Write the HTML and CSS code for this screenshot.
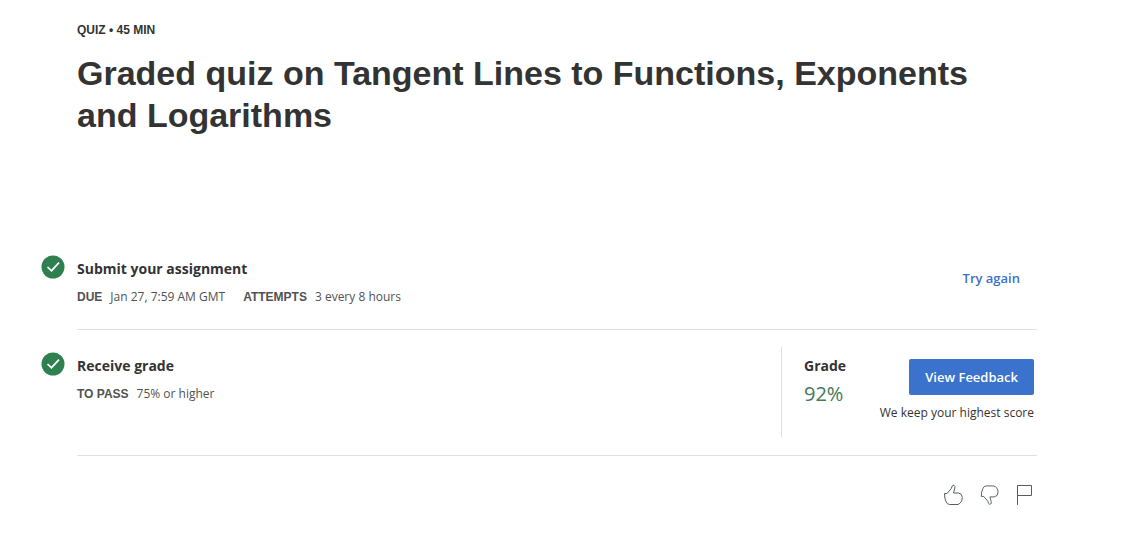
FILE: index.html
```html
<!DOCTYPE html>
<html lang="en">
<head>
<meta charset="utf-8">
<meta name="viewport" content="width=device-width, initial-scale=1">
<title>Graded quiz</title>
<link rel="stylesheet" href="styles.css">
</head>
<body>
<main class="page">
  <header class="intro">
    <p class="kind">QUIZ • 45 MIN</p>
    <h1 class="title">Graded quiz on Tangent Lines to Functions, Exponents and Logarithms</h1>
  </header>

  <section class="step">
    <svg class="check" viewBox="0 0 24 24" aria-hidden="true"><circle cx="12" cy="12" r="11.5"/><path d="M6.500 12l4 3.700 7.500-8"/></svg>
    <div class="info">
      <h2 class="name">Submit your assignment</h2>
      <dl class="facts">
        <div class="fact"><dt>DUE</dt><dd>Jan 27, 7:59 AM GMT</dd></div>
        <div class="fact"><dt>ATTEMPTS</dt><dd>3 every 8 hours</dd></div>
      </dl>
    </div>
    <div class="retry"><a class="link" href="#">Try again</a></div>
  </section>

  <section class="step step-grade">
    <svg class="check" viewBox="0 0 24 24" aria-hidden="true"><circle cx="12" cy="12" r="11.5"/><path d="M6.500 12l4 3.700 7.500-8"/></svg>
    <div class="info">
      <h2 class="name">Receive grade</h2>
      <dl class="facts">
        <div class="fact"><dt>TO PASS</dt><dd>75% or higher</dd></div>
      </dl>
    </div>
    <div class="result">
      <div class="grade">
        <h2 class="name">Grade</h2>
        <p class="score">92%</p>
      </div>
      <div class="feedback">
        <button class="button" type="button">View Feedback</button>
        <p class="note">We keep your highest score</p>
      </div>
    </div>
  </section>

  <footer class="reactions">
    <button class="icon" type="button" aria-label="Like"><svg viewBox="0 0 20 22"><path d="M1.500 9.500H4L8.300 4.500 9.200 2Q10 .8 11.200 1.500 12.300 2.200 11.800 4L10.500 9H15.500Q19.300 9.500 19.300 13.500 19.300 18.500 15 20.500H6.500Q4 20.300 3 17.500 1.500 15 1.500 9.500Z"/></svg></button>
    <button class="icon" type="button" aria-label="Dislike"><svg viewBox="0 0 21 22"><path d="M2.500 12.500H5L9.300 17.500 10.200 20Q11 21.200 12.200 20.500 13.300 19.800 12.800 18L11.500 13H16Q20 12.500 20 8 20 3 15.500 1.500H7.500Q5 1.500 4 4.500 2.300 7 2.500 12.500Z"/></svg></button>
    <button class="icon" type="button" aria-label="Report"><svg viewBox="0 0 20 22"><path d="M2.500 21V1.500H16.500V11.500H2.500"/></svg></button>
  </footer>
</main>
</body>
</html>
```
FILE: styles.css
```css
* {
  box-sizing: border-box;
}

body {
  margin: 0;
  background: #fff;
  color: #333;
  font: 12px/20px "Open Sans", "Noto Sans", sans-serif;
}

h1, h2, p, dl, dd {
  margin: 0;
}

.page {
  padding: 20px 95px 20px 41px;
}

.intro {
  padding: 0 36px;
  font-family: Arial, "Liberation Sans", sans-serif;
}

.kind {
  font-size: 12px;
  font-weight: 700;
}

.title {
  margin-top: 12px;
  font-size: 34px;
  line-height: 42px;
  font-weight: 700;
}

.step {
  display: flex;
  position: relative;
  padding: 18px 0 23px;
}

.step::after {
  content: "";
  position: absolute;
  right: 0;
  bottom: 0;
  left: 36px;
  border-bottom: 1px solid #e1e1e1;
}

.intro + .step {
  margin-top: 97px;
}

.check {
  flex: none;
  width: 24px;
  height: 24px;
  margin: 4px 12px 0 0;
}

.check circle {
  fill: #2f8050;
}

.check path {
  fill: none;
  stroke: #fff;
  stroke-width: 1.7;
}

.info {
  flex: 1;
  padding-top: 8px;
}

.name {
  font-size: 14px;
  line-height: 20px;
  font-weight: 700;
}

.facts {
  display: flex;
  gap: 18px;
  margin-top: 8px;
  color: #525252;
}

.fact {
  display: flex;
  gap: 8px;
}

.fact dt {
  font-family: Arial, "Liberation Sans", sans-serif;
  font-weight: 700;
}

.fact dd {
  font-weight: 400;
}

.retry {
  display: flex;
  align-items: center;
  padding: 0 17px 2px 0;
}

.link {
  color: #3b71ca;
  font-size: 13px;
  font-weight: 600;
  text-decoration: none;
}

.step-grade {
  padding: 17px 0 19px;
}

.step-grade .check {
  margin-top: 5px;
}

.step-grade .info {
  padding-top: 9px;
}

.result {
  display: flex;
  justify-content: space-between;
  width: 256px;
  min-height: 90px;
  padding: 9px 3px 0 22px;
  border-left: 1px solid #e1e1e1;
}

.score {
  margin-top: 4px;
  color: #43785a;
  font-size: 20px;
  line-height: 28px;
}

.feedback {
  display: flex;
  flex-direction: column;
  align-items: flex-end;
  gap: 8px;
  padding-top: 3px;
}

.button {
  height: 36px;
  padding: 0 16px;
  border: 0;
  border-radius: 2px;
  background: #3b72cc;
  color: #fff;
  font: 600 13px/20px "Open Sans", "Noto Sans", sans-serif;
}

.reactions {
  display: flex;
  justify-content: flex-end;
  gap: 16px;
  padding: 28px 2px 0 0;
}

.icon {
  display: block;
  padding: 0;
  border: 0;
  background: none;
}

.icon svg {
  display: block;
  width: 20px;
  height: 22px;
  fill: none;
  stroke: #565c66;
  stroke-width: 1;
  stroke-linejoin: round;
}
```
